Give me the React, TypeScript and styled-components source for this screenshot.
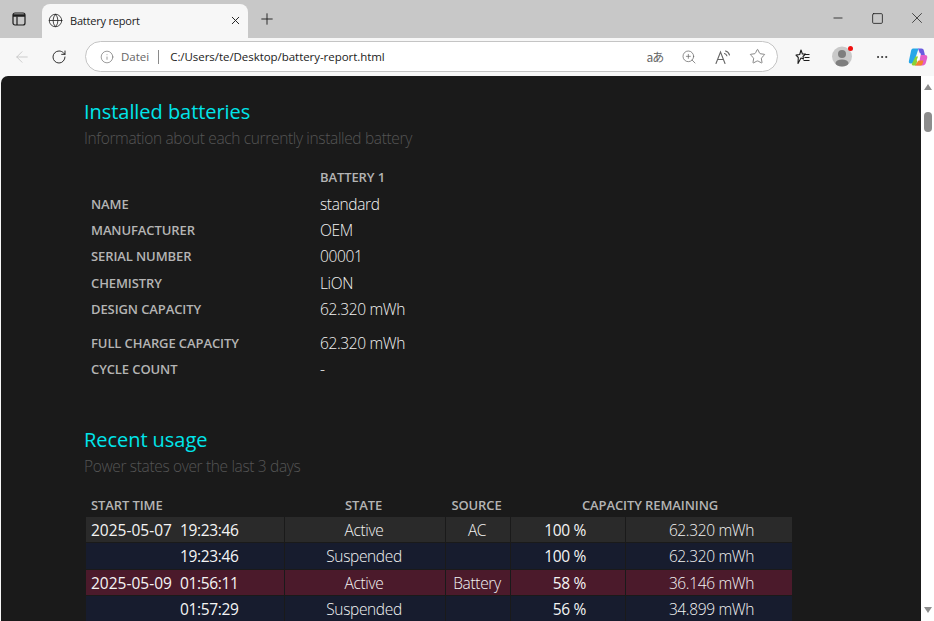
import React from 'react';
import styled, { createGlobalStyle } from 'styled-components';
import { ArrowLeft, Globe, Info, Minus, MoreHorizontal, Plus, RotateCw, Square, Star, X, ZoomIn } from 'lucide-react';

const GlobalStyle = createGlobalStyle`
  html, body { margin: 0; padding: 0; height: 100%; overflow: hidden; background: #f7f7f7; }
  * { box-sizing: border-box; }
`;

// --- Browser chrome ---
const Window = styled.div`
  width: 934px;
  height: 621px;
  display: flex;
  flex-direction: column;
  overflow: hidden;
  font-family: "Open Sans", "Liberation Sans", sans-serif;
`;
const TabStrip = styled.div`
  height: 38px;
  flex: none;
  display: flex;
  align-items: flex-end;
  background: #c8c8c8;
  color: #1c1c1c;
`;
const SidebarSlot = styled.div`
  width: 42px;
  height: 38px;
  padding-left: 12px;
  display: flex;
  align-items: center;
`;
const Tab = styled.div`
  width: 206px;
  height: 34px;
  padding: 0 6px 2px 6px;
  display: flex;
  align-items: center;
  gap: 7px;
  background: #f7f7f7;
  border-radius: 8px 8px 0 0;
  font-size: 11px;
  color: #222;
`;
const TabTitle = styled.span`
  flex: 1;
  letter-spacing: -0.2px;
`;
const NewTab = styled.div`
  width: 42px;
  height: 38px;
  padding-left: 10px;
  display: flex;
  align-items: center;
`;
const WindowButtons = styled.div`
  margin-left: auto;
  height: 36px;
  align-self: flex-start;
  display: flex;
  align-items: center;
  gap: 5.5px;
`;
const WindowButton = styled.div`
  width: 34px;
  display: flex;
  justify-content: center;
`;
const Toolbar = styled.div`
  height: 38px;
  flex: none;
  display: flex;
  align-items: center;
  background: #f7f7f7;
  padding: 0 6px 1px 13px;
`;
const NavButton = styled.div<{ $w: number }>`
  width: ${p => p.$w}px;
  flex: none;
  display: flex;
  justify-content: flex-start;
  align-items: center;
`;
const AddressBar = styled.div`
  width: 693px;
  height: 31px;
  margin-left: 1px;
  padding: 0 3px 0 14px;
  display: flex;
  align-items: center;
  background: #fff;
  border: 1px solid #c4c4c4;
  border-radius: 16px;
`;
const Scheme = styled.span`
  margin-left: 7px;
  padding-right: 9px;
  border-right: 1px solid #8a8a8a;
  font-size: 11.5px;
  line-height: 14px;
  color: #666;
`;
const Url = styled.span`
  margin-left: 11px;
  flex: 1;
  font-size: 11.5px;
  letter-spacing: -0.05px;
  color: #222;
`;
const ActionSlot = styled.div`
  width: 34px;
  display: flex;
  justify-content: center;
  align-items: center;
  color: #666;
`;
const Translate = styled.span`
  font-size: 12px;
  letter-spacing: -1px;
  font-family: "Noto Sans CJK JP", "Open Sans", sans-serif;
  color: #666;
`;
const ToolbarRight = styled.div`
  margin-left: 17px;
  display: flex;
  align-items: center;
  color: #222;
`;
const ToolSlot = styled.div<{ $w: number }>`
  width: ${p => p.$w}px;
  display: flex;
  align-items: center;
`;
const Avatar = styled.div`
  position: relative;
  width: 20px;
  height: 21px;
`;
const AvatarDot = styled.span`
  position: absolute;
  top: 0;
  right: -1px;
  width: 5px;
  height: 5px;
  border-radius: 50%;
  background: #f01010;
`;

// --- Page area ---
const Body = styled.div`
  flex: 1;
  min-height: 0;
  display: flex;
  background: #f7f7f7;
`;
const Page = styled.div`
  width: 920px;
  margin-left: 1px;
  height: 100%;
  overflow: hidden;
  background: #1a1a1a;
  border-radius: 7px 0 0 0;
  padding: 22px 0 0 83px;
  color: #e4e4e4;
`;
const Scrollbar = styled.div`
  flex: 1;
  display: flex;
  flex-direction: column;
  align-items: center;
  background: #fff;
  padding-top: 8px;
`;
const ScrollArrow = styled.span<{ $down?: boolean }>`
  width: 0;
  height: 0;
  border-left: 4px solid transparent;
  border-right: 4px solid transparent;
  ${p => (p.$down ? 'border-top: 6px solid #8d8d8d; margin-top: auto; margin-bottom: 8px;' : 'border-bottom: 6px solid #8d8d8d;')}
`;
const ScrollThumb = styled.span`
  width: 8px;
  height: 20px;
  margin-top: 22px;
  border-radius: 4px;
  background: #8d8d8d;
`;
const Heading = styled.h1`
  margin: 0;
  font-size: 20px;
  line-height: 28px;
  font-weight: 400;
  letter-spacing: -0.05px;
  color: #00e5ea;
`;
const Subheading = styled.div`
  margin-top: 1px;
  font-size: 15.5px;
  line-height: 22px;
  font-weight: 300;
  letter-spacing: -0.35px;
  color: #555;
`;

// --- Installed batteries ---
const InfoTable = styled.div`
  margin: 15px 0 44px;
  display: grid;
  grid-template-columns: 236px 1fr;
`;
const InfoLabel = styled.div<{ $gap?: boolean }>`
  height: ${p => (p.$gap ? 33.5 : 26.4)}px;
  padding: ${p => (p.$gap ? 7.5 : 0)}px 0 0 7px;
  font-size: 13px;
  font-weight: 600;
  letter-spacing: -0.1px;
  color: #b4b4b4;
  display: flex;
  align-items: center;
`;
const InfoValue = styled.div<{ $gap?: boolean }>`
  height: ${p => (p.$gap ? 33.5 : 26.4)}px;
  padding-top: ${p => (p.$gap ? 7.5 : 0)}px;
  font-size: 15.5px;
  font-weight: 300;
  letter-spacing: -0.35px;
  color: #f4f4f4;
  display: flex;
  align-items: center;
`;
const ColumnHead = styled(InfoValue)`
  font-size: 13px;
  font-weight: 600;
  letter-spacing: -0.1px;
  color: #b4b4b4;
`;

// --- Recent usage ---
const UsageTable = styled.table`
  margin-top: 16.5px;
  margin-left: 2px;
  width: 706px;
  table-layout: fixed;
  border-collapse: separate;
  border-spacing: 0;
`;
const HeadCell = styled.th<{ $left?: boolean }>`
  height: 23px;
  padding: 0 ${p => (p.$left ? 0 : 2)}px 0 ${p => (p.$left ? 5 : 0)}px;
  font-size: 13px;
  font-weight: 600;
  letter-spacing: -0.1px;
  color: #b4b4b4;
  text-align: ${p => (p.$left ? 'left' : 'center')};
`;
const Row = styled.tr<{ $kind: 'ac' | 'suspended' | 'battery' }>`
  td {
    background: ${p => (p.$kind === 'ac' ? '#2a2a2a' : p.$kind === 'battery' ? '#4b1a2b' : '#171c2e')};
  }
`;
const Cell = styled.td<{ $pad?: number; $strong?: boolean }>`
  height: 26.4px;
  padding: 1px ${p => p.$pad || 2}px 0 0;
  font-size: 15.5px;
  font-weight: ${p => (p.$strong ? 400 : 300)};
  letter-spacing: -0.35px;
  line-height: 20px;
  text-align: ${p => (p.$pad ? 'right' : 'center')};
  color: #f4f4f4;
  border-left: 1px solid #1a1a1a;
  border-bottom: 1px solid #1a1a1a;
  white-space: nowrap;
`;
const TimeCell = styled(Cell)`
  border-left: 0;
  padding-left: 5px;
  font-weight: 400;
  text-align: left;
`;
const DatePart = styled.span`
  display: inline-block;
  width: 89px;
  letter-spacing: 0;
`;

const SidebarIcon = () => (
  <svg width="14" height="14" viewBox="0 0 14 14" fill="none" stroke="#1c1c1c" strokeWidth="1.2">
    <rect x="1" y="1" width="12" height="12" rx="2" />
    <path d="M1 3.500h12" strokeWidth="2.500" />
    <path d="M5 4.500V13" />
  </svg>
);
const ReadAloudIcon = () => (
  <svg width="17" height="16" viewBox="0 0 17 16" fill="none" stroke="#666" strokeWidth="1.1" strokeLinecap="round">
    <path d="M1 14.500 5.500 3l4.500 11.500M2.700 10.500h5.600" />
    <path d="M9.500 4.500c1.200.3 2 1 2.400 2.300M10.500 2c2 .5 3.400 1.900 4 4" />
  </svg>
);
const FavoritesIcon = () => (
  <svg width="15" height="16" viewBox="0 0 15 16" fill="none" stroke="#1c1c1c" strokeWidth="1.1" strokeLinejoin="round">
    <path d="M6 1 7.400 5l-.1 0H10.500L8 7.500 8.500 10 6 9 3 14.500l.3-6L1 6.100l3.700-.6z" />
    <path d="M9.500 5.500h5M9.500 8.500h5M8.500 11.500h6" />
  </svg>
);
const ProfileIcon = () => (
  <svg width="20" height="21" viewBox="0 0 20 21">
    <circle cx="10" cy="10.500" r="10" fill="#c9c9c9" />
    <circle cx="10" cy="8" r="4" fill="#7e7e7e" />
    <ellipse cx="10" cy="17" rx="6.500" ry="3.600" fill="#7e7e7e" />
  </svg>
);
const CopilotIcon = () => (
  <svg width="20" height="20" viewBox="0 0 20 20" fill="none">
    <path d="M5 1.500h5.500L6.500 14c-.5 1.600-1.600 2.500-3 2.500H2.600C1 16.500.5 15 1 13.400L3 4c.3-1.500 1-2.500 2-2.500z" fill="#25a7e8" />
    <path d="M10 1.500h3.500c1.300 0 2 .8 2.400 2.200l1 4.300h-4.400z" fill="#6a5be0" />
    <path d="M4 16.500l3.500-7 3 0-2.500 9H5c-1 0-1.500-1-1-2z" fill="#8bd334" />
    <path d="M12.500 8H17c1.800 0 2.600 1.300 2.200 3l-1.400 5c-.5 1.600-1.600 2.500-3 2.500H8l1.500-2c1 0 1.600-.6 2-1.800z" fill="#e45fc9" />
    <path d="M7 18.500l3.500-5h5l-1 3.500c-.5 1-1.300 1.500-2.500 1.500z" fill="#f2842b" />
    <path d="M12 7l-2.400 6" stroke="#fff" strokeWidth="1.700" strokeLinecap="round" />
  </svg>
);

const batteryInfo = [
  { label: 'NAME', value: 'standard' },
  { label: 'MANUFACTURER', value: 'OEM' },
  { label: 'SERIAL NUMBER', value: '00001' },
  { label: 'CHEMISTRY', value: 'LiON' },
  { label: 'DESIGN CAPACITY', value: '62.320 mWh' },
  { label: 'FULL CHARGE CAPACITY', value: '62.320 mWh', gap: true },
  { label: 'CYCLE COUNT', value: '-' },
];

type Usage = { date?: string; time: string; state: string; source?: string; pct: string; mwh: string; kind: 'ac' | 'suspended' | 'battery' };
const usage: Usage[] = [
  { date: '2025-05-07', time: '19:23:46', state: 'Active', source: 'AC', pct: '100 %', mwh: '62.320 mWh', kind: 'ac' },
  { time: '19:23:46', state: 'Suspended', pct: '100 %', mwh: '62.320 mWh', kind: 'suspended' },
  { date: '2025-05-09', time: '01:56:11', state: 'Active', source: 'Battery', pct: '58 %', mwh: '36.146 mWh', kind: 'battery' },
  { time: '01:57:29', state: 'Suspended', pct: '56 %', mwh: '34.899 mWh', kind: 'suspended' },
];

export default function App() {
  return (
    <Window>
      <GlobalStyle />
      <TabStrip>
        <SidebarSlot><SidebarIcon /></SidebarSlot>
        <Tab>
          <Globe size={15} strokeWidth={1.3} />
          <TabTitle>Battery report</TabTitle>
          <X size={13} strokeWidth={1.8} />
        </Tab>
        <NewTab><Plus size={18} strokeWidth={1.2} /></NewTab>
        <WindowButtons>
          <WindowButton><Minus size={14} strokeWidth={1.4} /></WindowButton>
          <WindowButton><Square size={13} strokeWidth={1.5} /></WindowButton>
          <WindowButton><X size={18} strokeWidth={1} /></WindowButton>
        </WindowButtons>
      </TabStrip>
      <Toolbar>
        <NavButton $w={38}><ArrowLeft size={18} strokeWidth={1.1} color="#c4c4c4" /></NavButton>
        <NavButton $w={33}><RotateCw size={16} strokeWidth={1.4} color="#222" /></NavButton>
        <AddressBar>
          <Info size={14} strokeWidth={1.1} color="#666" />
          <Scheme>Datei</Scheme>
          <Url>C:/Users/te/Desktop/battery-report.html</Url>
          <ActionSlot><Translate>aあ</Translate></ActionSlot>
          <ActionSlot><ZoomIn size={16} strokeWidth={1.1} /></ActionSlot>
          <ActionSlot><ReadAloudIcon /></ActionSlot>
          <ActionSlot><Star size={17} strokeWidth={1.1} /></ActionSlot>
        </AddressBar>
        <ToolbarRight>
          <ToolSlot $w={37}><FavoritesIcon /></ToolSlot>
          <ToolSlot $w={43}>
            <Avatar><ProfileIcon /><AvatarDot /></Avatar>
          </ToolSlot>
          <ToolSlot $w={33}><MoreHorizontal size={14} strokeWidth={1.5} /></ToolSlot>
          <ToolSlot $w={20}><CopilotIcon /></ToolSlot>
        </ToolbarRight>
      </Toolbar>
      <Body>
        <Page>
          <Heading>Installed batteries</Heading>
          <Subheading>Information about each currently installed battery</Subheading>
          <InfoTable>
            <InfoLabel />
            <ColumnHead>BATTERY 1</ColumnHead>
            {batteryInfo.map(row => (
              <React.Fragment key={row.label}>
                <InfoLabel $gap={row.gap}>{row.label}</InfoLabel>
                <InfoValue $gap={row.gap}>{row.value}</InfoValue>
              </React.Fragment>
            ))}
          </InfoTable>
          <Heading>Recent usage</Heading>
          <Subheading>Power states over the last 3 days</Subheading>
          <UsageTable>
            <colgroup>
              <col style={{ width: 198 }} />
              <col style={{ width: 161 }} />
              <col style={{ width: 65 }} />
              <col style={{ width: 115 }} />
              <col style={{ width: 167 }} />
            </colgroup>
            <thead>
              <tr>
                <HeadCell $left>START TIME</HeadCell>
                <HeadCell>STATE</HeadCell>
                <HeadCell>SOURCE</HeadCell>
                <HeadCell colSpan={2}>CAPACITY REMAINING</HeadCell>
              </tr>
            </thead>
            <tbody>
              {usage.map(row => (
                <Row key={row.time + row.state} $kind={row.kind}>
                  <TimeCell><DatePart>{row.date}</DatePart>{row.time}</TimeCell>
                  <Cell>{row.state}</Cell>
                  <Cell>{row.source}</Cell>
                  <Cell $pad={39} $strong>{row.pct}</Cell>
                  <Cell $pad={38}>{row.mwh}</Cell>
                </Row>
              ))}
            </tbody>
          </UsageTable>
        </Page>
        <Scrollbar>
          <ScrollArrow />
          <ScrollThumb />
          <ScrollArrow $down />
        </Scrollbar>
      </Body>
    </Window>
  );
}
